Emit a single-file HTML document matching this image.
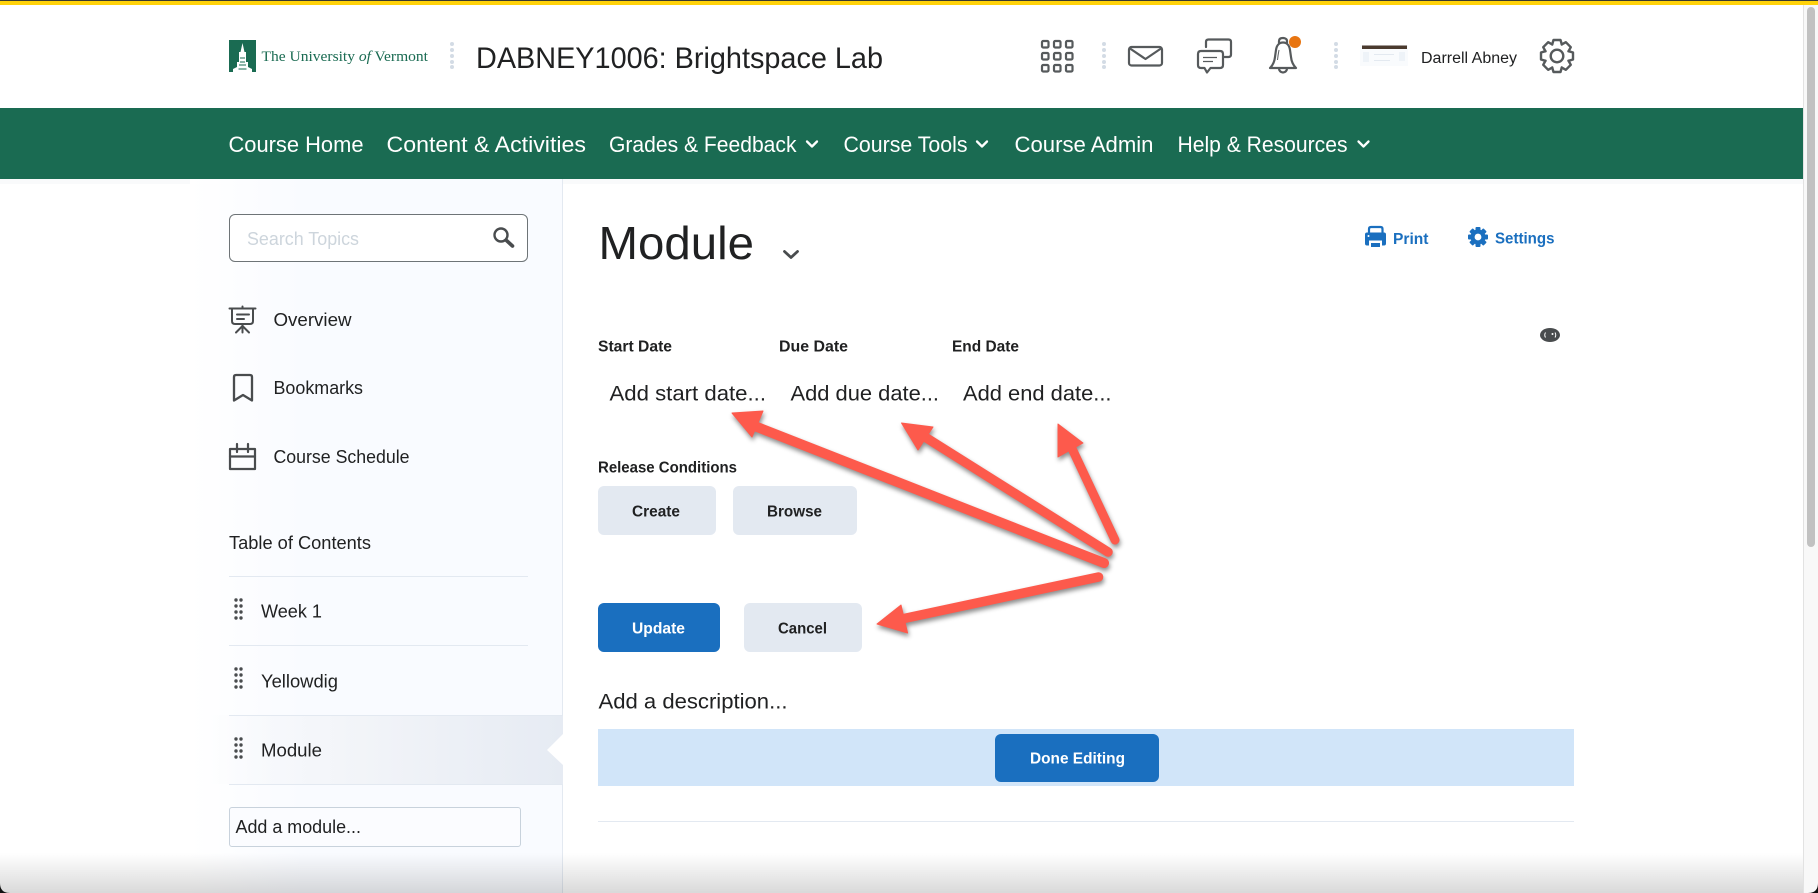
<!DOCTYPE html>
<html lang="en">
<head>
<meta charset="utf-8">
<title>DABNEY1006: Brightspace Lab</title>
<style>
html,body{margin:0;padding:0;width:1818px;height:893px;overflow:hidden;background:#fff}
body{position:relative;font-family:"Liberation Sans",sans-serif}
.b{position:absolute;box-sizing:border-box}
svg{position:absolute;left:0;top:0}
svg text{font-family:"Liberation Sans",sans-serif;fill:#202122}
</style>
</head>
<body>
<div class="b" style="left:0;top:0;width:1818px;height:1px;background:#3a3a30"></div>
<div class="b" style="left:0;top:1px;width:1818px;height:4px;background:#ffd20a"></div>
<div class="b" style="left:0;top:108px;width:1803px;height:71px;background:#1a6b52"></div>
<div class="b" style="left:0;top:179px;width:1803px;height:5px;background:#f9fafb"></div>

<div class="b" style="left:190px;top:179px;width:373px;height:714px;background:linear-gradient(90deg,#fff,#f9fbff 30%);border-right:1px solid #e3e9f1"></div>
<div class="b" style="left:190px;top:715px;width:373px;height:69px;background:linear-gradient(90deg,rgba(230,235,243,0) 5%,#f3f5f9 40%,#e6ebf3 100%)"></div>
<div class="b" style="left:229px;top:214px;width:299px;height:48px;background:#fff;border:1px solid #6e7477;border-radius:6px"></div>
<div class="b" style="left:229px;top:576px;width:299px;height:1px;background:#e3e9f1"></div>
<div class="b" style="left:229px;top:645px;width:299px;height:1px;background:#e3e9f1"></div>
<div class="b" style="left:229px;top:715px;width:334px;height:1px;background:#e3e9f1"></div>
<div class="b" style="left:229px;top:784px;width:334px;height:1px;background:#e3e9f1"></div>
<div class="b" style="left:229px;top:807px;width:292px;height:40px;background:#fbfcff;border:1px solid #c8d2dc;border-radius:3px"></div>

<div class="b" style="left:598px;top:486px;width:118px;height:49px;background:#e3e9f1;border-radius:6px"></div>
<div class="b" style="left:733px;top:486px;width:124px;height:49px;background:#e3e9f1;border-radius:6px"></div>
<div class="b" style="left:598px;top:603px;width:122px;height:49px;background:#1a6fbf;border-radius:6px"></div>
<div class="b" style="left:744px;top:603px;width:118px;height:49px;background:#e3e9f1;border-radius:6px"></div>
<div class="b" style="left:598px;top:729px;width:976px;height:57px;background:#d1e5f9"></div>
<div class="b" style="left:995px;top:734px;width:164px;height:48px;background:#1a6fbf;border-radius:6px"></div>
<div class="b" style="left:598px;top:821px;width:976px;height:1px;background:#e3e9f1"></div>

<div class="b" style="left:1803px;top:5px;width:15px;height:888px;background:#f8f8f8;border-left:1px solid #e2e2e2"></div>
<div class="b" style="left:1807px;top:7px;width:8px;height:540px;background:#c1c1c1;border-radius:4px"></div>

<svg width="1818" height="893" viewBox="0 0 1818 893" xmlns="http://www.w3.org/2000/svg">
  <!-- notch -->
  <polygon points="564,733 547,750 564,766" fill="#fff"/>

  <!-- logo -->
  <rect x="229" y="40" width="27" height="32" fill="#1a6b52"/>
  <path d="M242.5 43 L244.5 52 L246 52 L246 62 L248 62 L248 67 L252 69 L252 72 L233 72 L233 69 L237 67 L237 62 L239 62 L239 52 L240.5 52 Z" fill="#fff"/>
  <path d="M240 58h5M240 62h5M239 65h7M238.5 69h8" stroke="#1a6b52" stroke-width="1"/>
  <text x="261.500" y="61" textLength="166.500" lengthAdjust="spacingAndGlyphs" font-size="15" style="font-family:'Liberation Serif',serif;fill:#1a6b52">The University <tspan font-style="italic">of</tspan> Vermont</text>

  <!-- separators -->
  <g fill="#d3dbe5">
    <circle cx="452" cy="44" r="2"/><circle cx="452" cy="50" r="2"/><circle cx="452" cy="56" r="2"/><circle cx="452" cy="62" r="2"/><circle cx="452" cy="67" r="2"/>
    <circle cx="1104" cy="44" r="2"/><circle cx="1104" cy="50" r="2"/><circle cx="1104" cy="56" r="2"/><circle cx="1104" cy="62" r="2"/><circle cx="1104" cy="67" r="2"/>
    <circle cx="1336" cy="44" r="2"/><circle cx="1336" cy="50" r="2"/><circle cx="1336" cy="56" r="2"/><circle cx="1336" cy="62" r="2"/><circle cx="1336" cy="67" r="2"/>
  </g>

  <text x="476" y="68" textLength="407" lengthAdjust="spacingAndGlyphs" font-size="30">DABNEY1006: Brightspace Lab</text>

  <!-- header icons -->
  <g fill="none" stroke="#565a5c" stroke-width="2.2" stroke-linecap="round" stroke-linejoin="round">
    <rect x="1042" y="41" width="6.5" height="6.5" rx="1.2"/><rect x="1054" y="41" width="6.5" height="6.5" rx="1.2"/><rect x="1066" y="41" width="6.5" height="6.5" rx="1.2"/>
    <rect x="1042" y="53" width="6.5" height="6.5" rx="1.2"/><rect x="1054" y="53" width="6.5" height="6.5" rx="1.2"/><rect x="1066" y="53" width="6.5" height="6.5" rx="1.2"/>
    <rect x="1042" y="65" width="6.5" height="6.5" rx="1.2"/><rect x="1054" y="65" width="6.5" height="6.5" rx="1.2"/><rect x="1066" y="65" width="6.5" height="6.5" rx="1.2"/>
    <rect x="1129" y="47" width="33" height="18.5" rx="2.5"/>
    <path d="M1130 48.5 L1145.5 59 L1161 48.5"/>
    <path d="M1206 47 V42 q0-2.5 2.5-2.5 h20 q2.5 0 2.5 2.5 v12.5 q0 2.5-2.5 2.5 h-4"/>
    <path d="M1201 51 h19 q3 0 3 3 v11 q0 3-3 3 h-9.5 l-3.5 4.5 -2.5-4.5 h-3.5 q-3 0-3-3 v-11 q0-3 3-3 z"/>
    <path d="M1270 68 c3-3 4.500-6 5-11 l1-7 c.7-5 3.500-7.500 7-7.500 s6.300 2.500 7 7.500 l1 7 c.5 5 2 8 5 11 z"/>
    <path d="M1279 43 v-2 q0-3 4-3 s4 0 4 3 v2"/>
    <path d="M1279 68.500 a4 4 0 0 0 8 0"/>
  </g>
  <path d="M1203 57.500h14M1203 61.500h10" stroke="#565a5c" stroke-width="1.2" fill="none"/>
  <path d="M1279 50 q-1 5 -1.500 10" stroke="#565a5c" stroke-width="1" fill="none"/>
  <circle cx="1295" cy="42" r="6" fill="#e87511"/>

  <!-- avatar -->
  <rect x="1360" y="45" width="48" height="21" fill="#f9fbfd"/>
  <rect x="1362" y="45.500" width="45" height="3.500" fill="#4a3a2e"/>
  <rect x="1363" y="52" width="6" height="10" fill="#eef3f8"/>
  <rect x="1374" y="54" width="20" height="1" fill="#e3e9f0"/>
  <rect x="1374" y="60" width="16" height="1" fill="#e3e9f0"/>
  <rect x="1399" y="52" width="6" height="9" fill="#eef3f8"/>

  <text x="1421" y="63" textLength="96" lengthAdjust="spacingAndGlyphs" font-size="15.500">Darrell Abney</text>

  <!-- outline gear -->
  <g transform="translate(1557 56)" fill="none" stroke="#565a5c" stroke-width="2.400" stroke-linejoin="round" stroke-linecap="round">
    <circle r="6.300"/>
    <path d="M-4.800 -11.500 L-3.500 -16 H3.500 L4.800 -11.500"/>
    <path transform="rotate(45)" d="M-4.800 -11.500 L-3.500 -16 H3.500 L4.800 -11.500"/>
    <path transform="rotate(90)" d="M-4.800 -11.500 L-3.500 -16 H3.500 L4.800 -11.500"/>
    <path transform="rotate(135)" d="M-4.800 -11.500 L-3.500 -16 H3.500 L4.800 -11.500"/>
    <path transform="rotate(180)" d="M-4.800 -11.500 L-3.500 -16 H3.500 L4.800 -11.500"/>
    <path transform="rotate(225)" d="M-4.800 -11.500 L-3.500 -16 H3.500 L4.800 -11.500"/>
    <path transform="rotate(270)" d="M-4.800 -11.500 L-3.500 -16 H3.500 L4.800 -11.500"/>
    <path transform="rotate(315)" d="M-4.800 -11.500 L-3.500 -16 H3.500 L4.800 -11.500"/>
  </g>

  <!-- nav -->
  <g font-size="22">
    <text style="fill:#fff" x="228.500" y="152" textLength="135" lengthAdjust="spacingAndGlyphs" font-size="22">Course Home</text>
    <text style="fill:#fff" x="386.500" y="152" textLength="199.500" lengthAdjust="spacingAndGlyphs" font-size="22">Content &amp; Activities</text>
    <text style="fill:#fff" x="609" y="152" textLength="187.500" lengthAdjust="spacingAndGlyphs" font-size="22">Grades &amp; Feedback</text>
    <text style="fill:#fff" x="843.500" y="152" textLength="124" lengthAdjust="spacingAndGlyphs" font-size="22">Course Tools</text>
    <text style="fill:#fff" x="1014.500" y="152" textLength="139" lengthAdjust="spacingAndGlyphs" font-size="22">Course Admin</text>
    <text style="fill:#fff" x="1177.500" y="152" textLength="170" lengthAdjust="spacingAndGlyphs" font-size="22">Help &amp; Resources</text>
  </g>
  <g fill="none" stroke="#fff" stroke-width="2.300" stroke-linecap="round" stroke-linejoin="round">
    <path d="M807 141.500 l5 5 5-5"/>
    <path d="M977 141.500 l5 5 5-5"/>
    <path d="M1358.500 141.500 l5 5 5-5"/>
  </g>

  <!-- sidebar -->
  <text x="247" y="245" textLength="112" lengthAdjust="spacingAndGlyphs" font-size="18" style="fill:#cdd5dc">Search Topics</text>
  <circle cx="501" cy="235" r="6.500" fill="none" stroke="#494c4e" stroke-width="2.400"/>
  <path d="M506.500 240.500 L512.500 246" stroke="#494c4e" stroke-width="3.600" stroke-linecap="round"/>

  <g fill="none" stroke="#494c4e" stroke-width="2" stroke-linecap="round" stroke-linejoin="round">
    <path d="M229.500 308.500 H255.500 M242.500 306.500 V308.500"/>
    <path d="M232 309 V321 q0 3 3 3 h15 q3 0 3-3 V309"/>
    <path d="M237 314.500 h12 M237 319 h7"/>
    <path d="M242.500 324 V332.500 M242.500 326 L236 332.500 M242.500 326 L249 332.500"/>
    <path d="M234 400.500 V377 q0-2 2-2 h14 q2 0 2 2 v23.500 l-9-5.500 z" stroke-width="2.300"/>
    <rect x="230" y="449" width="25" height="20" stroke-width="2.200"/>
    <path d="M230 456.500 H255 M237 444 V452 M248 444 V452" stroke-width="2.200"/>
  </g>

  <text x="273.500" y="326" textLength="78" lengthAdjust="spacingAndGlyphs" font-size="18">Overview</text>
  <text x="273.500" y="394" textLength="89.500" lengthAdjust="spacingAndGlyphs" font-size="18">Bookmarks</text>
  <text x="273.500" y="463" textLength="136" lengthAdjust="spacingAndGlyphs" font-size="18">Course Schedule</text>
  <text x="229" y="549" textLength="142" lengthAdjust="spacingAndGlyphs" font-size="18">Table of Contents</text>

  <g fill="#494c4e">
    <circle cx="236" cy="600" r="1.700"/><circle cx="241" cy="600" r="1.700"/><circle cx="236" cy="606" r="1.700"/><circle cx="241" cy="606" r="1.700"/><circle cx="236" cy="612" r="1.700"/><circle cx="241" cy="612" r="1.700"/><circle cx="236" cy="618" r="1.700"/><circle cx="241" cy="618" r="1.700"/>
    <circle cx="236" cy="669" r="1.700"/><circle cx="241" cy="669" r="1.700"/><circle cx="236" cy="675" r="1.700"/><circle cx="241" cy="675" r="1.700"/><circle cx="236" cy="681" r="1.700"/><circle cx="241" cy="681" r="1.700"/><circle cx="236" cy="687" r="1.700"/><circle cx="241" cy="687" r="1.700"/>
    <circle cx="236" cy="739" r="1.700"/><circle cx="241" cy="739" r="1.700"/><circle cx="236" cy="745" r="1.700"/><circle cx="241" cy="745" r="1.700"/><circle cx="236" cy="751" r="1.700"/><circle cx="241" cy="751" r="1.700"/><circle cx="236" cy="757" r="1.700"/><circle cx="241" cy="757" r="1.700"/>
  </g>
  <text x="261" y="617.500" textLength="61" lengthAdjust="spacingAndGlyphs" font-size="18">Week 1</text>
  <text x="261" y="687.500" textLength="77" lengthAdjust="spacingAndGlyphs" font-size="18">Yellowdig</text>
  <text x="261" y="756.500" textLength="61" lengthAdjust="spacingAndGlyphs" font-size="18">Module</text>
  <text x="235.500" y="833" textLength="125.500" lengthAdjust="spacingAndGlyphs" font-size="18">Add a module...</text>

  <!-- main -->
  <text x="598.500" y="259" textLength="155.500" lengthAdjust="spacingAndGlyphs" font-size="46">Module</text>
  <path d="M784.500 251.500 l6.500 6 6.500-6" fill="none" stroke="#494c4e" stroke-width="2.800" stroke-linecap="round" stroke-linejoin="round"/>

  <path d="M1369 233 V229 q0-2 2-2 h9.500 q2 0 2 2 v4" fill="none" stroke="#1a6fbf" stroke-width="2.200"/>
  <path d="M1367 232.500 h17 q2 0 2 2 v9 q0 2-2 2 h-2 v-5 h-13 v5 h-2 q-2 0-2-2 v-9 q0-2 2-2 z" fill="#1a6fbf"/>
  <path d="M1371 243 h9 v4 h-9 z" fill="#1a6fbf"/>
  <circle cx="1368.500" cy="236" r="1" fill="#fff"/>
  <text x="1393" y="244" textLength="35.500" lengthAdjust="spacingAndGlyphs" font-size="16" font-weight="700" style="fill:#1a6fbf">Print</text>

  <g transform="translate(1478 237)" fill="#1a6fbf">
    <circle r="7.500"/>
    <rect x="-2.500" y="-10" width="5" height="20" rx="1"/>
    <rect x="-2.500" y="-10" width="5" height="20" rx="1" transform="rotate(45)"/>
    <rect x="-2.500" y="-10" width="5" height="20" rx="1" transform="rotate(90)"/>
    <rect x="-2.500" y="-10" width="5" height="20" rx="1" transform="rotate(135)"/>
    <circle r="3.400" fill="#fff"/>
  </g>
  <text x="1495" y="243.500" textLength="59.500" lengthAdjust="spacingAndGlyphs" font-size="16" font-weight="700" style="fill:#1a6fbf">Settings</text>

  <ellipse cx="1550" cy="335" rx="10" ry="7" fill="#494c4e"/>
  <path d="M1545.500 332.500 q-1.500 2.500 0 5" stroke="#fff" stroke-width="1" fill="none"/>
  <path d="M1555 332.500 q1.500 2.500 0 5" stroke="#fff" stroke-width="1" fill="none"/>
  <circle cx="1552.500" cy="334" r="1" fill="#fff"/>

  <text x="598" y="351.500" textLength="74" lengthAdjust="spacingAndGlyphs" font-size="15.500" font-weight="700">Start Date</text>
  <text x="779" y="351.500" textLength="69" lengthAdjust="spacingAndGlyphs" font-size="15.500" font-weight="700">Due Date</text>
  <text x="952" y="351.500" textLength="67" lengthAdjust="spacingAndGlyphs" font-size="15.500" font-weight="700">End Date</text>
  <text x="609.500" y="400.500" textLength="156.500" lengthAdjust="spacingAndGlyphs" font-size="21">Add start date...</text>
  <text x="790.500" y="400.500" textLength="148.500" lengthAdjust="spacingAndGlyphs" font-size="21">Add due date...</text>
  <text x="963" y="400.500" textLength="148.500" lengthAdjust="spacingAndGlyphs" font-size="21">Add end date...</text>
  <text x="598" y="472.500" textLength="139" lengthAdjust="spacingAndGlyphs" font-size="15.500" font-weight="700">Release Conditions</text>
  <text x="632" y="516.500" textLength="48" lengthAdjust="spacingAndGlyphs" font-size="16" font-weight="700">Create</text>
  <text x="767" y="516.500" textLength="55" lengthAdjust="spacingAndGlyphs" font-size="16" font-weight="700">Browse</text>
  <text x="632" y="633.500" textLength="53" lengthAdjust="spacingAndGlyphs" font-size="16" font-weight="700" style="fill:#fff">Update</text>
  <text x="778" y="633.500" textLength="49" lengthAdjust="spacingAndGlyphs" font-size="16" font-weight="700">Cancel</text>
  <text x="598.500" y="708.500" textLength="189" lengthAdjust="spacingAndGlyphs" font-size="21">Add a description...</text>
  <text x="1030" y="763.500" textLength="95" lengthAdjust="spacingAndGlyphs" font-size="16" font-weight="700" style="fill:#fff">Done Editing</text>

  <!-- arrows -->
  <g style="filter:drop-shadow(1px 3px 2.500px rgba(0,0,0,.45))">
    <g fill="#fd5a4c" stroke="#fd5a4c" stroke-linecap="round" stroke-linejoin="round">
      <path d="M1104 563 L752 425" stroke-width="10" fill="none"/>
      <polygon points="732,413 763,411 752,437" stroke-width="1"/>
      <path d="M1108 552 L917 432" stroke-width="9.500" fill="none"/>
      <polygon points="901.500,423 933,427 918,450" stroke-width="1"/>
      <path d="M1115 540 L1068 440" stroke-width="9" fill="none"/>
      <polygon points="1058,424 1083,443 1058,457" stroke-width="1"/>
      <path d="M1098.500 577 L897 620" stroke-width="9.500" fill="none"/>
      <polygon points="877,624 901,605 907.600,633" stroke-width="1"/>
    </g>
  </g>
</svg>

<div class="b" style="left:0;top:853px;width:1803px;height:40px;background:linear-gradient(180deg,rgba(0,0,0,0),rgba(0,0,0,.15))"></div>
<svg width="1818" height="893" viewBox="0 0 1818 893" xmlns="http://www.w3.org/2000/svg">
  <path d="M0 883 Q0 893 10 893 L0 893 Z" fill="#111"/>
  <path d="M1818 883 Q1818 893 1808 893 L1818 893 Z" fill="#111"/>
</svg>
</body>
</html>
